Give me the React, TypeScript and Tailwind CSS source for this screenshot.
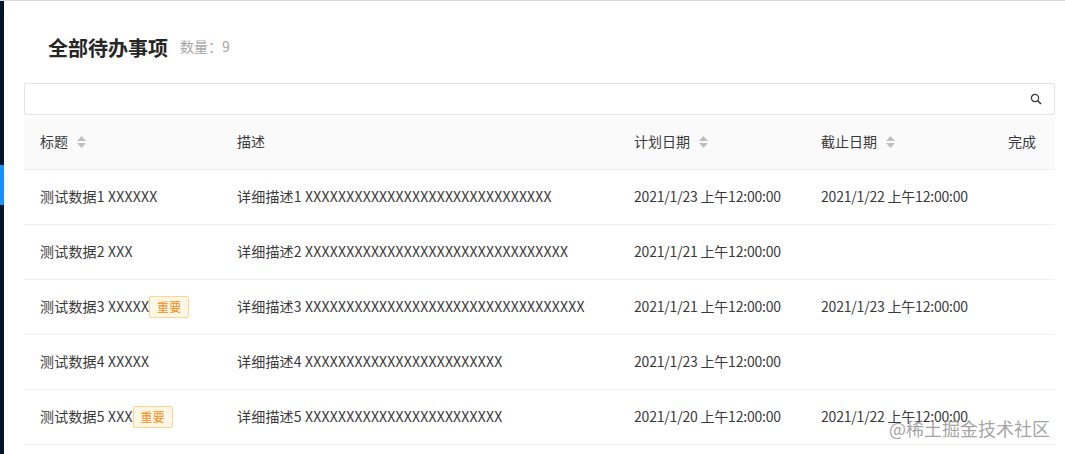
const rows = [
  { title: "测试数据1 XXXXXX", desc: "详细描述1 " + "X".repeat(30), plan: "2021/1/23 上午12:00:00", due: "2021/1/22 上午12:00:00" },
  { title: "测试数据2 XXX", desc: "详细描述2 " + "X".repeat(32), plan: "2021/1/21 上午12:00:00", due: "" },
  { title: "测试数据3 XXXXX", tag: true, desc: "详细描述3 " + "X".repeat(34), plan: "2021/1/21 上午12:00:00", due: "2021/1/23 上午12:00:00" },
  { title: "测试数据4 XXXXX", desc: "详细描述4 " + "X".repeat(24), plan: "2021/1/23 上午12:00:00", due: "" },
  { title: "测试数据5 XXX", tag: true, desc: "详细描述5 " + "X".repeat(24), plan: "2021/1/20 上午12:00:00", due: "2021/1/22 上午12:00:00" },
]

const SortIcon = () => (
  <svg width="9" height="12" viewBox="0 0 9 12" className="ml-[9px] mt-[2px] text-[#bfbfbf]">
    <path d="M4.5 0 L9 5 H0 Z M0 7 H9 L4.5 12 Z" fill="currentColor" />
  </svg>
)

const SearchIcon = () => (
  <svg width="12" height="12" viewBox="0 0 12 12" fill="none" stroke="#333" strokeWidth="1.2">
    <circle cx="5" cy="5" r="3.6" />
    <path d="M7.7 7.7 L11 11" strokeWidth="1.5" />
  </svg>
)

export default function App() {
  return (
    <div
      className="relative flex h-[454px] w-[1065px] overflow-hidden border-t border-[#d9d9d9] bg-white text-[14px] text-[#3a3a3a]"
      style={{ fontFamily: '"Noto Sans CJK SC", "Liberation Sans", sans-serif' }}
    >
      <div className="flex w-[4px] shrink-0 flex-col bg-[#001529]">
        <div className="mt-[164px] h-[40px] bg-[#1890ff]" />
      </div>
      <div className="ml-[20px] w-[1031px]">
        <div className="flex h-[82px] items-center pt-[11px] pl-[24px]">
          <h1 className="text-[20px] font-bold text-[#262626]">全部待办事项</h1>
          <span className="mb-[2px] ml-[12px] text-[14px] text-[#a6a6a6]">数量：9</span>
        </div>
        <div className="flex h-[32px] items-center justify-end rounded-[2px] border border-[#e4e4e4] pr-[12px]">
          <SearchIcon />
        </div>
        <div className="mt-[3px] grid h-[52px] grid-cols-[197px_397px_187px_187px_63px] items-center border-b border-[#f0f0f0] bg-[#fafafa] pb-[5px] [&>div]:pl-[16px]">
          <div className="flex items-center">标题<SortIcon /></div>
          <div>描述</div>
          <div className="flex items-center">计划日期<SortIcon /></div>
          <div className="flex items-center">截止日期<SortIcon /></div>
          <div>完成</div>
        </div>
        {rows.map((row) => (
          <div
            key={row.title}
            className="grid h-[55px] grid-cols-[197px_397px_187px_187px_63px] items-center border-b border-[#f0f0f0] pb-[2px] [&>div]:pl-[16px]"
          >
            <div className="flex items-center whitespace-nowrap tracking-[0.2px]">
              {row.title}
              {row.tag && (
                <span className="mt-[2px] flex h-[22px] w-[40px] items-center justify-center rounded-[2px] border border-[#ffd591] bg-[#fff7e6] text-[12px] text-[#fa8c16]">
                  重要
                </span>
              )}
            </div>
            <div className="whitespace-nowrap tracking-[0.2px]">{row.desc}</div>
            <div className="whitespace-nowrap tracking-[-0.2px]">{row.plan}</div>
            <div className="whitespace-nowrap tracking-[-0.2px]">{row.due}</div>
            <div />
          </div>
        ))}
      </div>
      <div className="absolute left-[889px] top-[414px] text-[18px] text-[#8c8c8c]/80">@稀土掘金技术社区</div>
    </div>
  )
}
